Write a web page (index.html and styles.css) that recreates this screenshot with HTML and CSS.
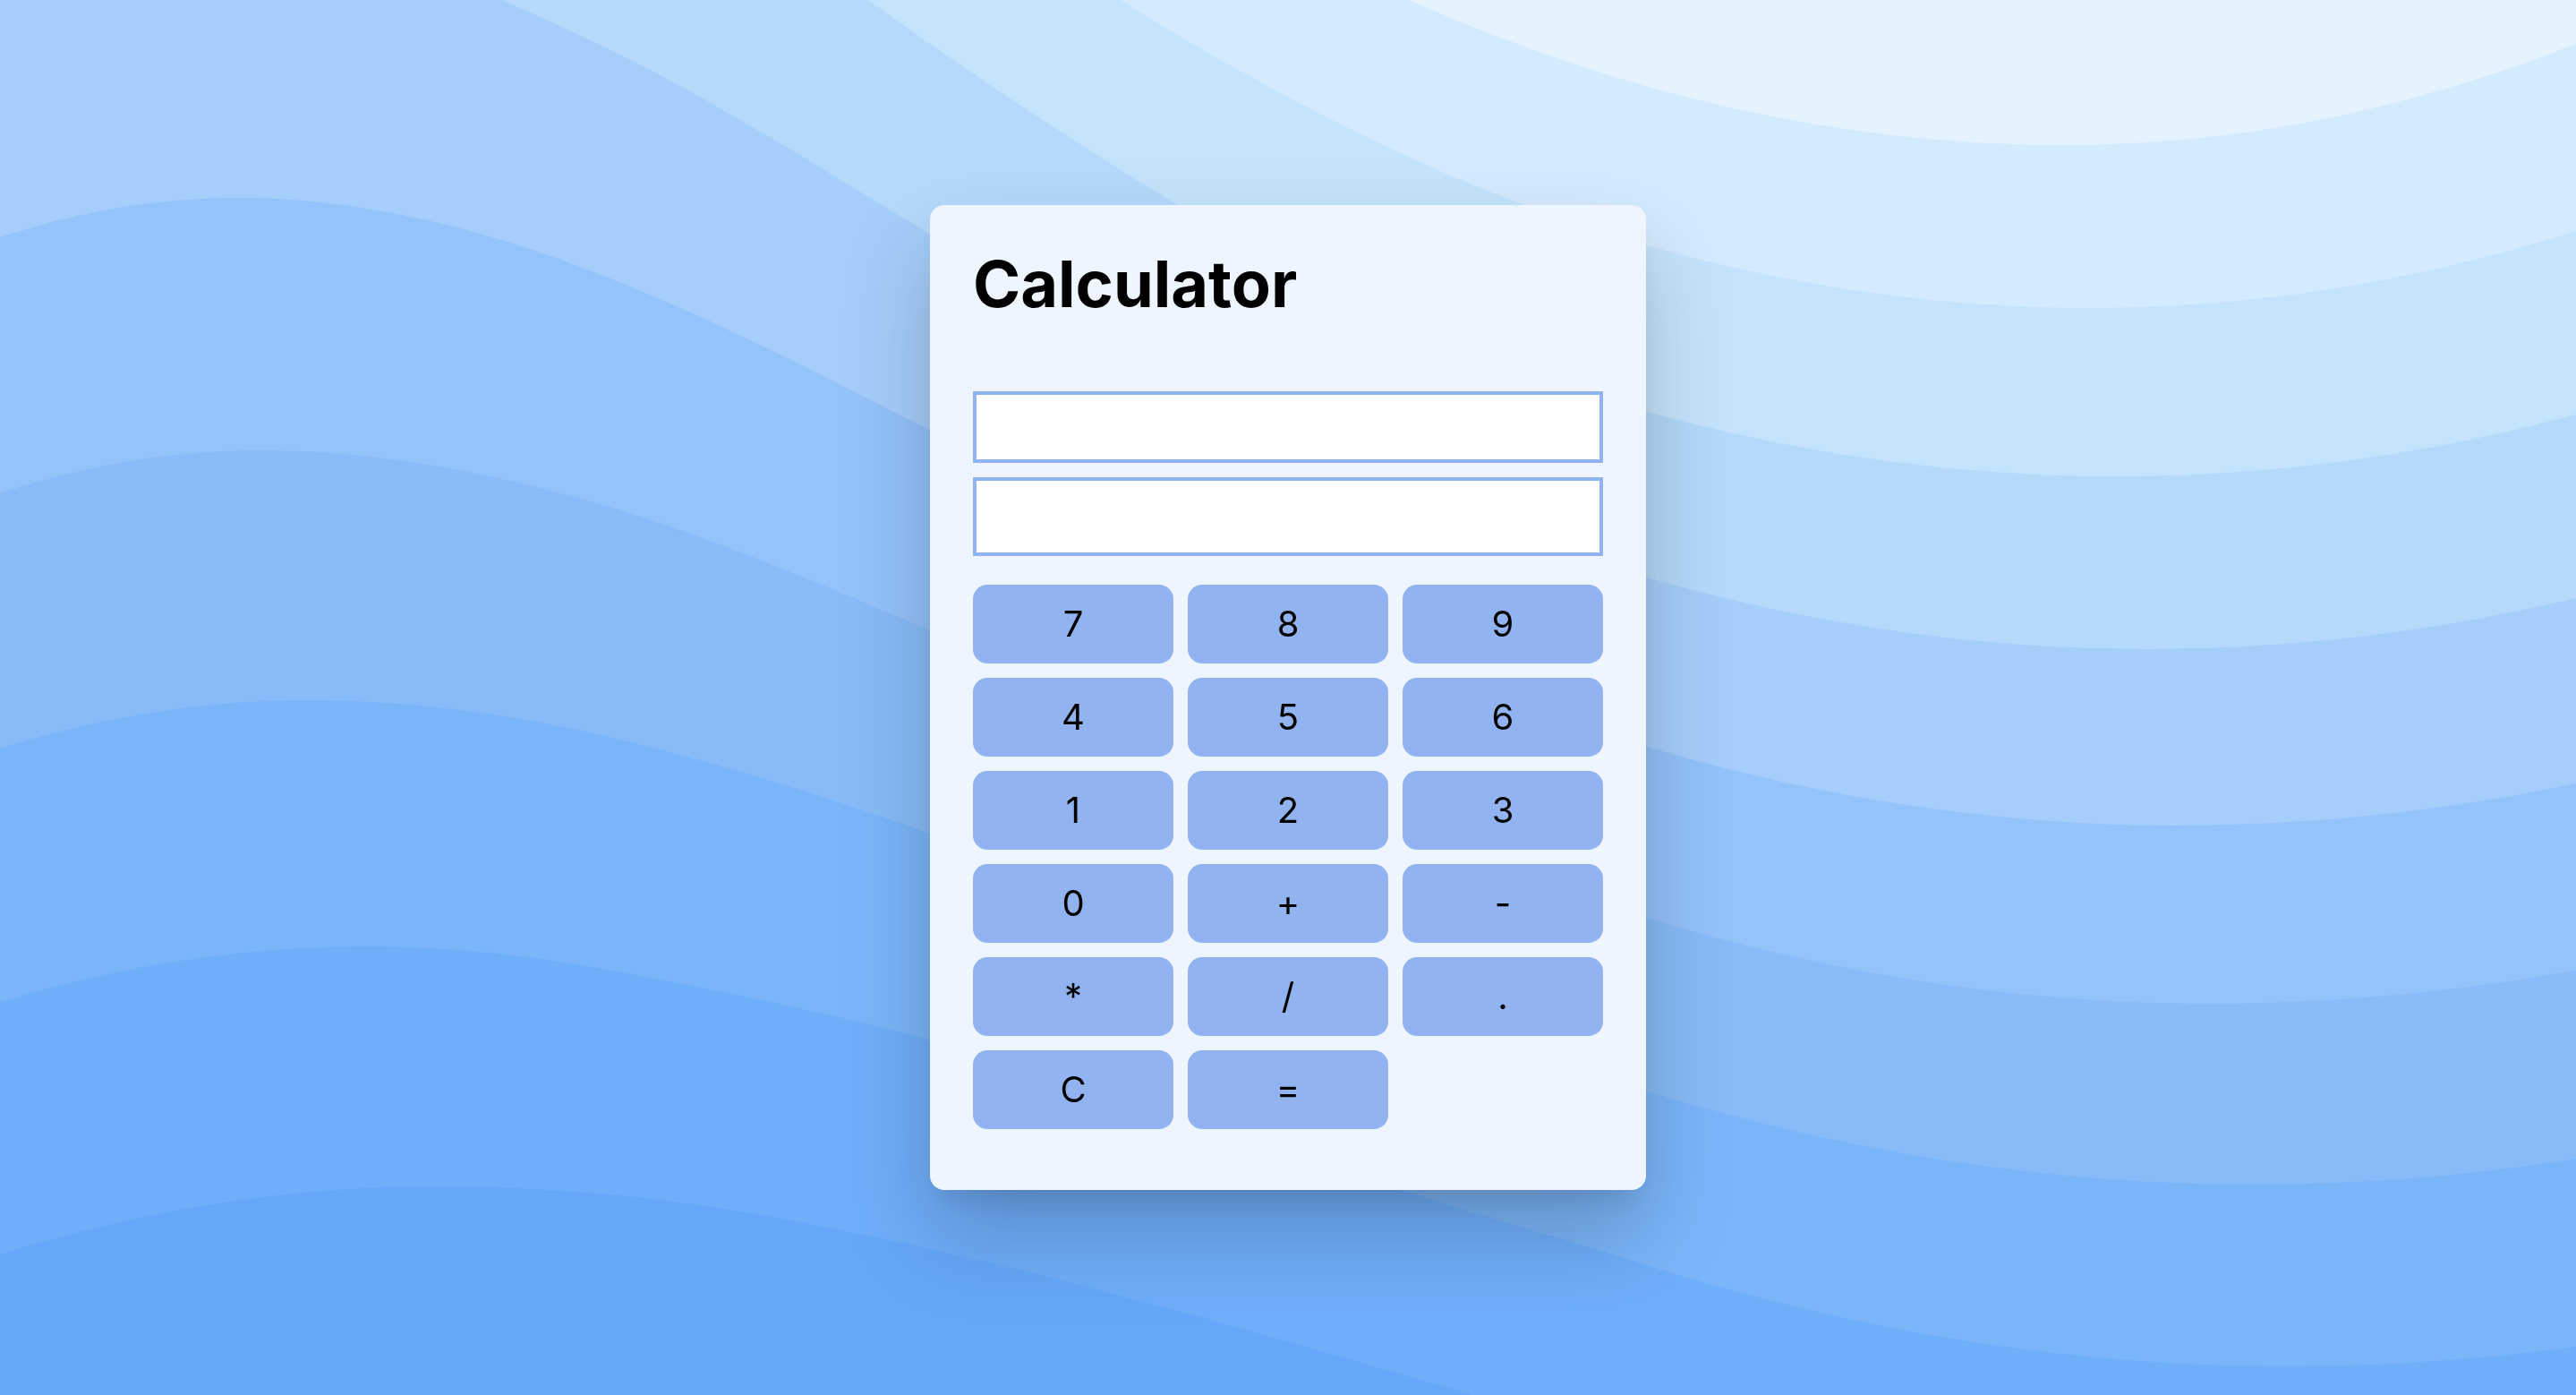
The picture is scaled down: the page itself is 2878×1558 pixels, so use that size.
FILE: index.html
```html
<!DOCTYPE html>
<html lang="en">
<head>
  <meta charset="utf-8">
  <meta name="viewport" content="width=device-width, initial-scale=1">
  <title>Calculator</title>
  <link rel="stylesheet" href="styles.css">
</head>
<body>
  <svg class="waves" viewBox="0 0 2878 1558" preserveAspectRatio="xMidYMid slice" aria-hidden="true">
    <path fill="#d4eafe" d="M0 0H1574Q1940 162 2306 162Q2592 162 2878 49V1558H0Z"/>
    <path fill="#c4e4fd" d="M0 0H1252C1448 122 1644 219 1840 274Q2088 344 2335 344Q2607 344 2878 258V1558H0Z"/>
    <path fill="#b4d9fb" d="M0 0H970C1085 83 1201 160 1316 229C1491 334 1665 411 1840 460Q2102 532 2363 532Q2621 532 2878 463V1558H0Z"/>
    <path fill="#a5cefa" d="M0 0H561C642 36 723 73 804 121C883 165 961 215 1040 262C1307 419 1573 568 1840 645Q2119 725 2398 725Q2638 725 2878 668V1558H0Z"/>
    <path fill="#94c2fb" d="M0 265Q134 221 267 221C368 221 469 240 570 271C727 320 883 401 1040 481C1307 614 1573 754 1840 834Q2136 922 2431 922Q2655 922 2878 875V1558H0Z"/>
    <path fill="#88bbf8" d="M0 551Q146 503 292 503C416 503 539 526 663 561C789 597 914 652 1040 704C1307 815 1573 943 1840 1025Q2154 1121 2468 1121Q2673 1121 2878 1084V1558H0Z"/>
    <path fill="#7bb5f9" d="M0 836Q173 782 345 782C451 782 557 796 663 819C789 848 914 886 1040 931C1307 1027 1573 1137 1840 1219Q2180 1323 2520 1323Q2699 1323 2878 1294V1558H0Z"/>
    <path fill="#6faef9" d="M0 1119Q205 1057 409 1057C503 1057 596 1067 690 1085C807 1107 923 1130 1040 1162C1215 1211 1391 1271 1566 1329C1657 1359 1749 1384 1840 1413Q2197 1526 2554 1526Q2716 1526 2878 1504V1558H0Z"/>
    <path fill="#65a8f9" d="M0 1401Q244 1325 488 1325C555 1325 623 1329 690 1335C807 1346 923 1370 1040 1395C1241 1440 1441 1499 1642 1557V1558H0Z"/>
  </svg>

  <main class="calculator">
    <h1 class="title">Calculator</h1>
    <div class="displays">
      <input class="display display-history" type="text" aria-label="Expression" readonly>
      <input class="display display-result" type="text" aria-label="Result" readonly>
    </div>
    <div class="keys">
      <button class="key" type="button">7</button>
      <button class="key" type="button">8</button>
      <button class="key" type="button">9</button>
      <button class="key" type="button">4</button>
      <button class="key" type="button">5</button>
      <button class="key" type="button">6</button>
      <button class="key" type="button">1</button>
      <button class="key" type="button">2</button>
      <button class="key" type="button">3</button>
      <button class="key" type="button">0</button>
      <button class="key" type="button">+</button>
      <button class="key" type="button">-</button>
      <button class="key" type="button">*</button>
      <button class="key" type="button">/</button>
      <button class="key" type="button">.</button>
      <button class="key" type="button">C</button>
      <button class="key" type="button">=</button>
    </div>
  </main>
</body>
</html>
```

FILE: styles.css
```css
*,
*::before,
*::after {
  box-sizing: border-box;
}

body {
  margin: 0;
  min-height: 100vh;
  display: flex;
  align-items: center;
  justify-content: center;
  background: #e4f3fe;
  color: #000;
  font-family: Inter, "Liberation Sans", sans-serif;
}

.waves {
  position: fixed;
  inset: 0;
  z-index: -1;
  width: 100%;
  height: 100%;
}

.calculator {
  width: 100%;
  max-width: 800px;
  padding: 48px 48px 68px;
  border-radius: 16px;
  background: #eef5ff;
  box-shadow: 0 50px 100px rgba(0, 0, 0, 0.2), 0 20px 30px -10px rgba(0, 0, 0, 0.1);
}

.title {
  margin: 0 0 80px;
  font-size: 72px;
  line-height: 80px;
  font-weight: 700;
}

.displays {
  display: flex;
  flex-direction: column;
  gap: 16px;
  margin-bottom: 32px;
}

.display {
  width: 100%;
  margin: 0;
  padding: 0 16px;
  border: 4px solid #90b4f1;
  border-radius: 0;
  background: #fff;
  font: inherit;
  text-align: right;
  outline: none;
}

.display-history {
  height: 80px;
  font-size: 32px;
}

.display-result {
  height: 88px;
  font-size: 40px;
}

.keys {
  display: grid;
  grid-template-columns: repeat(3, 1fr);
  gap: 16px;
}

.key {
  height: 88px;
  padding: 0 0 2px;
  border: 0;
  border-radius: 16px;
  background: #91b4f0;
  color: inherit;
  font: inherit;
  font-size: 40px;
  cursor: pointer;
}
```
